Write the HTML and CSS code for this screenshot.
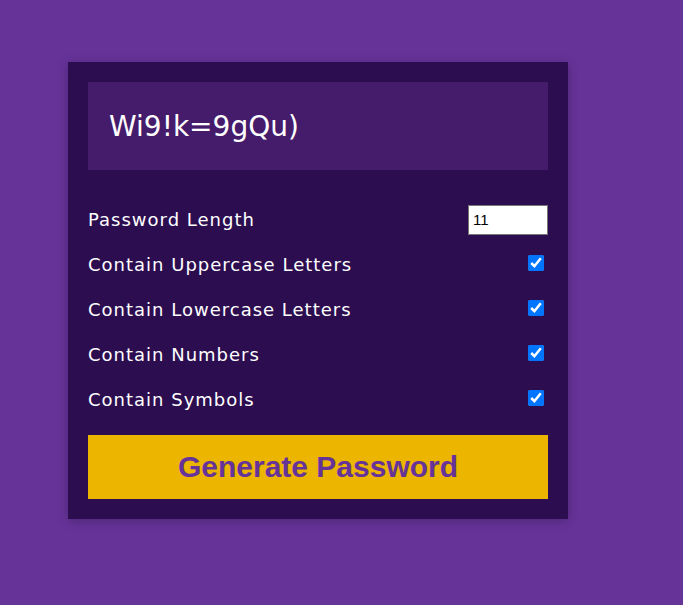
FILE: index.html
```html
<!DOCTYPE html>
<html>
<head>
<meta charset="utf-8">
<link rel="stylesheet" href="styles.css">
</head>
<body>
<div class="page">
  <div class="card">
    <div class="result">Wi9!k=9gQu)</div>
    <div class="settings">
      <div class="row"><label>Password Length</label><input class="len" type="number" value="11"></div>
      <div class="row"><label>Contain Uppercase Letters</label><input type="checkbox" checked></div>
      <div class="row"><label>Contain Lowercase Letters</label><input type="checkbox" checked></div>
      <div class="row"><label>Contain Numbers</label><input type="checkbox" checked></div>
      <div class="row"><label>Contain Symbols</label><input type="checkbox" checked></div>
    </div>
    <button class="gen">Generate Password</button>
  </div>
</div>
</body>
</html>
```
FILE: styles.css
```css
html, body { margin: 0; padding: 0; }
body {
  background: #663399;
  min-height: 605px;
  font-family: "DejaVu Sans", "Noto Sans", sans-serif;
}
.page { padding: 62px 0 0 68px; }
.card {
  width: 460px;
  padding: 20px;
  background: #2c0e50;
  box-shadow: 0 2px 10px rgba(0,0,0,0.25);
}
.result {
  height: 88px;
  background: #451c6b;
  color: #fff;
  font-size: 28px;
  display: flex;
  align-items: center;
  padding: 0 21px;
}
.settings { padding: 27px 0 13px; }
.row {
  display: flex;
  justify-content: space-between;
  align-items: center;
  height: 45px;
  color: #fff;
  font-size: 18px;
}
.row label { letter-spacing: 1px; }
.len {
  width: 80px;
  height: 30px;
  box-sizing: border-box;
  padding: 0 4px;
  border: 1px solid #767676;
  font-family: "Liberation Sans", Arial, sans-serif;
  font-size: 15px;
  letter-spacing: 0;
}
.row input[type=checkbox] { margin: 0 4px 4px 0; width: 16px; height: 16px; }
.gen {
  display: block;
  width: 100%;
  height: 64px;
  border: none;
  background: #ebb500;
  color: #663399;
  font-family: "Liberation Sans", Arial, sans-serif;
  font-weight: bold;
  font-size: 30px;
}
```
